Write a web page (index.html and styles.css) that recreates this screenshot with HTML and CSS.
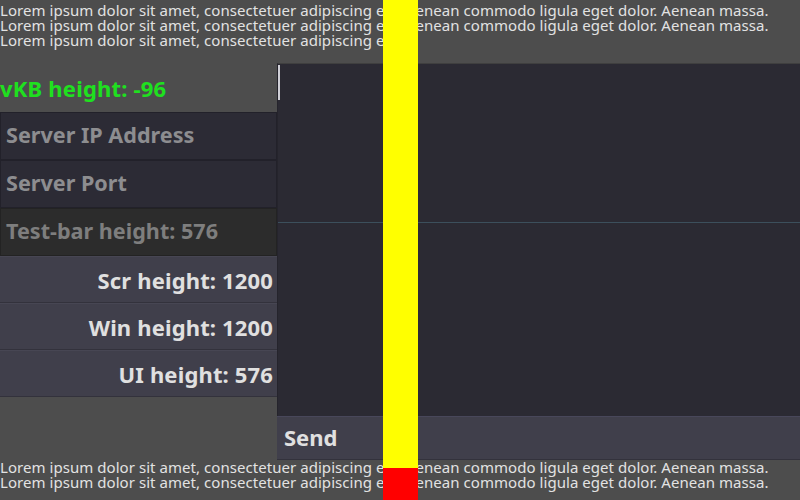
FILE: index.html
```html
<!DOCTYPE html>
<html>
<head>
<meta charset="utf-8">
<link rel="stylesheet" href="styles.css">
</head>
<body>
<div class="screen">
  <div class="lorem lorem-top">
    <div class="line">Lorem ipsum dolor sit amet, consectetuer adipiscing elit. Aenean commodo ligula eget dolor. Aenean massa.</div>
    <div class="line">Lorem ipsum dolor sit amet, consectetuer adipiscing elit. Aenean commodo ligula eget dolor. Aenean massa.</div>
    <div class="line">Lorem ipsum dolor sit amet, consectetuer adipiscing elit.</div>
  </div>
  <div class="main">
    <div class="left">
      <div class="vkb">vKB height: -96</div>
      <div class="field">Server IP Address</div>
      <div class="field">Server Port</div>
      <div class="field readonly">Test-bar height: 576</div>
      <div class="btn right">Scr height: 1200</div>
      <div class="btn right">Win height: 1200</div>
      <div class="btn right">UI height: 576</div>
    </div>
    <div class="rightcol">
      <div class="textedit">
        <div class="te-top"><span class="caret"></span></div>
        <div class="te-bottom"></div>
      </div>
      <div class="btn send">Send</div>
    </div>
  </div>
  <div class="lorem lorem-bottom">
    <div class="line">Lorem ipsum dolor sit amet, consectetuer adipiscing elit. Aenean commodo ligula eget dolor. Aenean massa.</div>
    <div class="line">Lorem ipsum dolor sit amet, consectetuer adipiscing elit. Aenean commodo ligula eget dolor. Aenean massa.</div>
  </div>
  <div class="testbar">
    <div class="tb-yellow"></div>
    <div class="tb-red"></div>
  </div>
</div>
</body>
</html>
```

FILE: styles.css
```css
html, body {
  margin: 0;
  padding: 0;
}
body {
  background: #4d4d4d;
  font-family: "Noto Sans", "Open Sans", sans-serif;
}
.screen {
  position: relative;
  width: 800px;
  height: 500px;
  overflow: hidden;
  background: #4d4d4d;
}
.lorem {
  color: #e2e2e2;
  font-size: 15px;
  line-height: 15px;
  letter-spacing: 0.05px;
  white-space: nowrap;
}
.lorem-top {
  padding-top: 3px;
  height: 60px;
}
.main {
  display: flex;
  height: 397px;
}
.left {
  width: 277px;
  display: flex;
  flex-direction: column;
}
.vkb {
  height: 49px;
  display: flex;
  align-items: center;
  color: #1fe01f;
  font-weight: 700;
  font-size: 22px;
  letter-spacing: 0.2px;
}
.field, .btn {
  box-sizing: border-box;
  height: 48px;
  display: flex;
  align-items: center;
  font-weight: 700;
  font-size: 22px;
  padding: 0 5px;
}
.field {
  background: #2c2b35;
  border: 1px solid #22212a;
  color: #8d8d90;
  padding-bottom: 4px;
  font-size: 21.6px;
}
.field.readonly {
  background: #2c2c2c;
  border-color: #232323;
  color: #7e7e7e;
}
.btn {
  background: #403f4b;
  border-top: 1px solid #474653;
  border-bottom: 1px solid #33323c;
  color: #e0e0e0;
  height: 47px;
}
.btn.right {
  justify-content: flex-end;
  padding-right: 4px;
  letter-spacing: 0.15px;
}
.rightcol {
  flex: 1;
  display: flex;
  flex-direction: column;
}
.textedit {
  flex: 1;
  display: flex;
  flex-direction: column;
  background: #2b2a33;
  border-left: 1px solid #25242c;
  border-top: 1px solid #3f3f3f;
}
.te-top {
  height: 157px;
  border-bottom: 1px solid #3c4f5c;
  padding: 1px 0 0 0;
}
.caret {
  display: block;
  width: 2px;
  height: 35px;
  background: #cfcfd6;
}
.te-bottom {
  flex: 1;
}
.send {
  height: 44px;
  padding-left: 7px;
  padding-bottom: 3px;
  border-top: 1px solid #48475a;
}
.lorem-bottom {
  padding-top: 0;
}
.testbar {
  position: absolute;
  left: 383px;
  top: 0;
  width: 35px;
  height: 500px;
  display: flex;
  flex-direction: column;
}
.tb-yellow {
  flex: 1;
  background: #ffff00;
}
.tb-red {
  height: 32px;
  background: #ff0000;
}
```
